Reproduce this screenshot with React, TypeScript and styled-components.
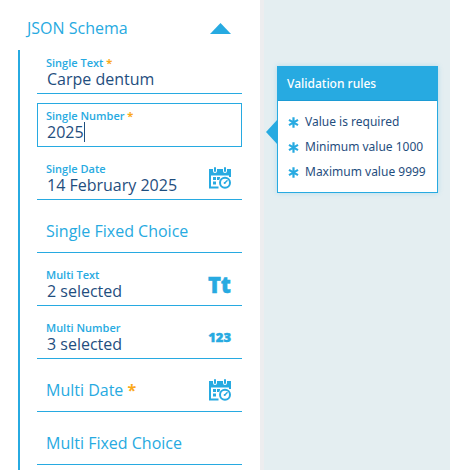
import React, { useId, useState } from 'react';
import styled, { createGlobalStyle, css } from 'styled-components';

const blue = '#27aae1';
const navy = '#1f4e7e';
const orange = '#fba919';

const GlobalStyle = createGlobalStyle`
  * { box-sizing: border-box; }
  body { margin: 0; background: #e4eef1; font-family: "Open Sans", sans-serif; }
  button, input, select { font: inherit; color: inherit; margin: 0; padding: 0; border: 0; background: none; }
`;

const Page = styled.main`
  display: flex;
  min-height: 100vh;
`;

const Sidebar = styled.section`
  display: flex;
  flex-direction: column;
  flex: 0 0 264px;
  background: #fff;
  border-right: 4px solid #ededef;
  padding: 12px 18px 0;
`;

const SectionToggle = styled.button`
  display: flex;
  align-items: center;
  justify-content: space-between;
  height: 32px;
  padding: 0 11px 0 9px;
  font-size: 16px;
  color: ${blue};
  cursor: pointer;
`;

const Fields = styled.form`
  display: flex;
  flex-direction: column;
  flex: 1;
  gap: 9px;
  margin-top: 6px;
  padding-left: 17px;
  border-left: 2px solid ${blue};
`;

const FieldBox = styled.div<{ $active?: boolean }>`
  position: relative;
  display: flex;
  align-items: center;
  height: 44px;
  padding: ${(p) => (p.$active ? '0 10px 0 8px' : '1px 11px 0 9px')};
  border: solid ${blue};
  border-width: ${(p) => (p.$active ? '1px' : '0 0 1px')};
`;

const FieldBody = styled.div<{ $empty: boolean }>`
  display: grid;
  flex: 1;
  min-width: 0;
  ${(p) =>
    p.$empty
      ? css`grid-template-areas: "stack"; & > * { grid-area: stack; }`
      : css`grid-template-rows: 14px 18px;`}
`;

const Label = styled.label<{ $large: boolean }>`
  color: ${blue};
  white-space: nowrap;
  font-size: ${(p) => (p.$large ? 16 : 11)}px;
  font-weight: ${(p) => (p.$large ? 400 : 600)};
  line-height: ${(p) => (p.$large ? 24 : 14)}px;
  pointer-events: none;
`;

const Required = styled.span`
  color: ${orange};
  font-weight: 700;
`;

const ValueLine = styled.div`
  display: flex;
  align-items: center;
  min-width: 0;
  padding-left: 1px;
`;

const controlStyle = css`
  color: ${navy};
  font-size: 16px;
  line-height: 20px;
  height: 20px;
  outline: none;
`;

const TextControl = styled.input<{ $fit?: boolean }>`
  && { ${controlStyle} }
  ${(p) => (p.$fit ? 'field-sizing: content; caret-color: transparent;' : 'width: 100%;')}
`;

const SelectControl = styled.select`
  && { ${controlStyle} }
  width: 100%;
  appearance: none;
`;

const Caret = styled.span`
  flex: none;
  width: 1px;
  height: 20px;
  background: ${navy};
`;

const IconButton = styled.button`
  display: grid;
  place-items: center;
  flex: 0 0 22px;
  height: 28px;
  color: ${blue};
  cursor: pointer;
`;

const Glyph = styled.span<{ $size: number }>`
  font-size: ${(p) => p.$size}px;
  font-weight: 800;
  line-height: 24px;
  -webkit-text-stroke: 0.4px ${blue};
`;

const Tooltip = styled.aside`
  position: absolute;
  top: -38px;
  left: calc(100% + 36px);
  width: 161px;
  background: #fff;
  border: 1px solid ${blue};
  box-shadow: 0 0 5px rgba(39, 170, 225, 0.25);
  font-family: "Noto Sans", "Open Sans", sans-serif;
`;

const TooltipArrow = styled.svg`
  position: absolute;
  top: 52px;
  right: 100%;
`;

const TooltipTitle = styled.h2`
  margin: 0;
  padding: 0 9px;
  background: ${blue};
  border-bottom: 1px solid #1c9bd4;
  color: #fff;
  font-size: 12px;
  font-weight: 500;
  line-height: 33px;
`;

const RuleList = styled.ul`
  display: grid;
  gap: 1px;
  margin: 0;
  padding: 9px 0 8px 10px;
  list-style: none;
`;

const Rule = styled.li`
  display: flex;
  align-items: center;
  gap: 6px;
  color: ${navy};
  font-size: 12px;
  line-height: 24px;
  white-space: nowrap;
`;

const UpTriangle = () => (
  <svg width="21" height="11" viewBox="0 0 21 11" aria-hidden="true">
    <path d="M10.5 0 21 11H0z" fill={blue} />
  </svg>
);

const CalendarClock = () => (
  <svg width="22" height="22" viewBox="0 0 22 22" fill="none" aria-hidden="true">
    <path d="M0 2h22v6.5H0z" fill={blue} />
    <path d="M1 7v13.5h8.5" stroke={blue} strokeWidth="2" />
    <path d="M21 7v3" stroke={blue} strokeWidth="2" />
    <path d="M6 0v4M16 0v4" stroke="#fff" strokeWidth="4" strokeLinecap="round" />
    <path d="M6 1v3M16 1v3" stroke={blue} strokeWidth="2" strokeLinecap="round" />
    <path d="M4 10h3v3H4zM8 10h3v3H8zM4 14.5h3v3H4z" fill={blue} />
    <circle cx="16" cy="15.8" r="6.6" fill="#fff" />
    <circle cx="16" cy="15.8" r="5" stroke={blue} strokeWidth="2" />
    <path d="m15.5 16.2 3-3" stroke={blue} strokeWidth="1.4" />
    <circle cx="15.6" cy="16.1" r="1" fill={blue} />
  </svg>
);

const Asterisk = () => (
  <svg width="11" height="11" viewBox="0 0 11 11" aria-hidden="true">
    <path d="M5.5 0.3v10.4M1 2.9l9 5.2M1 8.1l9-5.2" stroke={blue} strokeWidth="2.2" />
  </svg>
);

type FieldProps = {
  label: string;
  initial?: string;
  required?: boolean;
  active?: boolean;
  choices?: string[];
  action?: { name: string; icon: React.ReactNode };
  rules?: string[];
};

function Field({ label, initial = '', required, active, choices, action, rules }: FieldProps) {
  const id = useId();
  const [value, setValue] = useState(initial);
  const empty = value === '';
  return (
    <FieldBox $active={active}>
      <FieldBody $empty={empty}>
        <Label htmlFor={id} $large={empty}>
          {label}
          {required && <Required> *</Required>}
        </Label>
        <ValueLine>
          {choices ? (
            <SelectControl id={id} value={value} onChange={(e) => setValue(e.target.value)}>
              <option value="" />
              {choices.map((c) => (
                <option key={c}>{c}</option>
              ))}
            </SelectControl>
          ) : (
            <TextControl
              id={id}
              type="text"
              $fit={active}
              required={required}
              value={value}
              onChange={(e) => setValue(e.target.value)}
            />
          )}
          {active && <Caret />}
        </ValueLine>
      </FieldBody>
      {action && (
        <IconButton type="button" aria-label={action.name}>
          {action.icon}
        </IconButton>
      )}
      {rules && (
        <Tooltip>
          <TooltipArrow width="12" height="26" viewBox="0 0 12 26" aria-hidden="true">
            <path d="M12 0v26L0 13z" fill={blue} />
          </TooltipArrow>
          <TooltipTitle>Validation rules</TooltipTitle>
          <RuleList>
            {rules.map((r) => (
              <Rule key={r}>
                <Asterisk />
                {r}
              </Rule>
            ))}
          </RuleList>
        </Tooltip>
      )}
    </FieldBox>
  );
}

const choices = ['First', 'Second', 'Third'];

export default function App() {
  const [open, setOpen] = useState(true);
  return (
    <Page>
      <GlobalStyle />
      <Sidebar>
        <SectionToggle type="button" aria-expanded={open} onClick={() => setOpen(!open)}>
          JSON Schema
          <UpTriangle />
        </SectionToggle>
        {open && (
          <Fields>
            <Field label="Single Text" initial="Carpe dentum" required />
            <Field
              label="Single Number"
              initial="2025"
              required
              active
              rules={['Value is required', 'Minimum value 1000', 'Maximum value 9999']}
            />
            <Field label="Single Date" initial="14 February 2025" action={{ name: 'Pick date', icon: <CalendarClock /> }} />
            <Field label="Single Fixed Choice" choices={choices} />
            <Field label="Multi Text" initial="2 selected" action={{ name: 'Edit texts', icon: <Glyph $size={22}>Tt</Glyph> }} />
            <Field label="Multi Number" initial="3 selected" action={{ name: 'Edit numbers', icon: <Glyph $size={13}>123</Glyph> }} />
            <Field label="Multi Date" required action={{ name: 'Pick dates', icon: <CalendarClock /> }} />
            <Field label="Multi Fixed Choice" choices={choices} />
          </Fields>
        )}
      </Sidebar>
    </Page>
  );
}
